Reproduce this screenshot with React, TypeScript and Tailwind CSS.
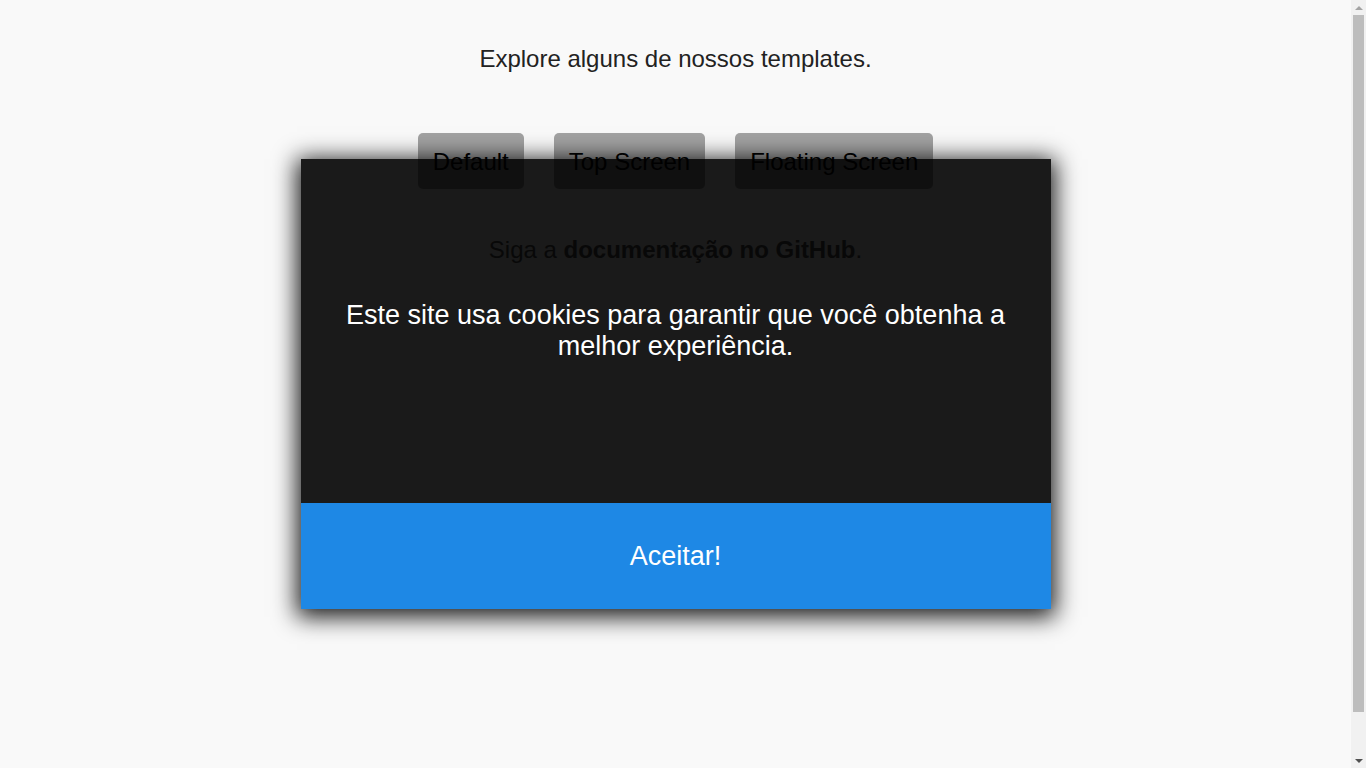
function Scrollbar() {
  return (
    <div className="flex h-screen w-[15px] shrink-0 flex-col items-center bg-[#f1f1f1]">
      <div className="flex h-[15px] w-full items-center justify-center">
        <div className="h-0 w-0 border-x-[4px] border-b-[4px] border-x-transparent border-b-[#a3a3a3]" />
      </div>
      <div className="mx-auto h-[697px] w-[11px] bg-[#bdbdbd]" />
      <div className="flex-1" />
      <div className="flex h-[15px] w-full items-center justify-center">
        <div className="h-0 w-0 border-x-[4px] border-t-[4px] border-x-transparent border-t-[#505050]" />
      </div>
    </div>
  );
}

export default function App() {
  const templates = ['Default', 'Top Screen', 'Floating Screen'];

  return (
    <div
      className="flex h-screen overflow-hidden bg-[#f9f9f9] text-center"
      style={{ fontFamily: '"Liberation Sans", Arial, sans-serif' }}
    >
      <div className="relative flex-1">
        {/* Page content sits over the overlay */}
        <div className="relative z-20 pt-[45px]">
          <h2 className="text-[24px] leading-[28px] text-[#222]">Explore alguns de nossos templates.</h2>

          <div className="mt-[60px] flex justify-center gap-[30px]">
            {templates.map((t) => (
              <button
                key={t}
                className="rounded-[5px] bg-black/35 px-[15px] pt-[15px] pb-[13px] text-[24px] leading-[28px] text-black"
              >
                {t}
              </button>
            ))}
          </div>

          <p className="mt-[47px] text-[24px] leading-[28px] text-[#080808]">
            Siga a <b>documentação no GitHub</b>.
          </p>
        </div>

        {/* Cookie consent */}
        <div className="absolute inset-0 z-10 flex items-center justify-center">
          <div className="flex h-[450px] w-[750px] flex-col shadow-[0_4px_22px_4px_rgba(0,0,0,0.9)]">
            <div className="flex flex-1 items-center justify-center bg-[#1a1a1a] px-[40px]">
              <p className="text-[27px] leading-[31px] text-white">
                Este site usa cookies para garantir que você obtenha a melhor experiência.
              </p>
            </div>
            <button className="h-[106px] bg-[#1e88e5] text-[27px] text-white">Aceitar!</button>
          </div>
        </div>
      </div>
      <Scrollbar />
    </div>
  );
}
